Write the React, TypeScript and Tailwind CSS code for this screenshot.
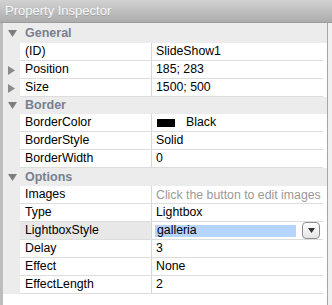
import React from 'react';

type Row = {
  name: string;
  value?: string;
  expandable?: boolean;
  kind?: 'color' | 'hint' | 'select';
};

type Section = { title: string; h: string; rows: Row[] };

const SECTIONS: Section[] = [
  {
    title: 'General',
    h: 'h-[20px]',
    rows: [
      { name: '(ID)', value: 'SlideShow1' },
      { name: 'Position', value: '185; 283', expandable: true },
      { name: 'Size', value: '1500; 500', expandable: true },
    ],
  },
  {
    title: 'Border',
    h: 'h-[17px]',
    rows: [
      { name: 'BorderColor', value: 'Black', kind: 'color' },
      { name: 'BorderStyle', value: 'Solid' },
      { name: 'BorderWidth', value: '0' },
    ],
  },
  {
    title: 'Options',
    h: 'h-[18px]',
    rows: [
      { name: 'Images', value: 'Click the button to edit images', kind: 'hint' },
      { name: 'Type', value: 'Lightbox' },
      { name: 'LightboxStyle', value: 'galleria', kind: 'select' },
      { name: 'Delay', value: '3' },
      { name: 'Effect', value: 'None' },
      { name: 'EffectLength', value: '2' },
    ],
  },
];

function DownTri({ className }: { className?: string }) {
  return (
    <svg width="9" height="7" viewBox="0 0 9 7" className={className}>
      <path d="M0 0 H9 L4.5 7 Z" fill="#7d7d7d" />
    </svg>
  );
}

function RightTri() {
  return (
    <svg width="7" height="9" viewBox="0 0 7 9">
      <path d="M0 0 L7 4.5 L0 9 Z" fill="#8a8a8a" />
    </svg>
  );
}

function ValueCell({ row }: { row: Row }) {
  if (row.kind === 'color') {
    return (
      <div className="flex items-center pl-[5px]">
        <span className="w-[18px] h-[8px] bg-black" />
        <span className="ml-[11px]">{row.value}</span>
      </div>
    );
  }
  if (row.kind === 'hint') {
    return <div className="pl-[4px] text-[#9a9a9a] whitespace-nowrap overflow-hidden">{row.value}</div>;
  }
  if (row.kind === 'select') {
    return (
      <div className="flex items-center pl-[3px] pr-[3px] h-full">
        <div className="flex-1 h-[12px] bg-[#b5d5fd] flex items-center pl-[2px]">{row.value}</div>
        <div className="ml-[6px] w-[18px] h-[17px] rounded-[4px] border border-[#8e8e8e] bg-gradient-to-b from-white to-[#e4e4e4] flex items-center justify-center">
          <svg width="7" height="5" viewBox="0 0 7 5">
            <path d="M0 0 H7 L3.5 5 Z" fill="#333" />
          </svg>
        </div>
      </div>
    );
  }
  return <div className="pl-[4px]">{row.value}</div>;
}

export default function App() {
  return (
    <div
      className="w-[332px] h-[305px] flex flex-col overflow-hidden bg-[#f0f0f0] text-[12.3px] text-black"
      style={{ fontFamily: '"Liberation Sans", Arial, sans-serif' }}
    >
      {/* Title bar */}
      <div className="h-[23px] flex items-center pl-[5px] bg-gradient-to-b from-[#d2d2d2] to-[#acacac] border-b border-[#9c9c9c]">
        <span className="text-[#f6f6f6] text-[13px] [text-shadow:0_1px_0_rgba(0,0,0,0.15)]">Property Inspector</span>
      </div>

      {/* Body */}
      <div className="flex-1 flex min-h-0">
        <div className="flex-1 flex flex-col bg-white border-l-[3px] border-l-[#bdbdbd] border-r border-r-[#a6a6a6]">
          {SECTIONS.map((sec) => (
            <div key={sec.title}>
              <div className={`${sec.h} flex items-center bg-[#ececec]`}>
                <DownTri className="ml-[5px]" />
                <span className="ml-[8px] font-bold text-[12.5px] text-[#77808e]">{sec.title}</span>
              </div>
              {sec.rows.map((row) => (
                <div key={row.name} className="h-[18px] flex">
                  <div className="w-[17px] bg-[#ececec] flex items-center pl-[5px]">
                    {row.expandable && <RightTri />}
                  </div>
                  <div className="flex-1 flex border-b border-[#dddddd] min-w-0">
                    <div
                      className={`w-[132px] shrink-0 flex items-center pl-[5px] border-r border-[#d6d6d6] ${
                        row.kind === 'select' ? 'bg-[#e8e8e8]' : ''
                      }`}
                    >
                      {row.name}
                    </div>
                    <div className="flex-1 min-w-0 flex flex-col justify-center">
                      <ValueCell row={row} />
                    </div>
                  </div>
                  <div className="w-[4px]" />
                </div>
              ))}
            </div>
          ))}
        </div>
        <div className="w-[4px] bg-[#f0f0f0]" />
      </div>
    </div>
  );
}
